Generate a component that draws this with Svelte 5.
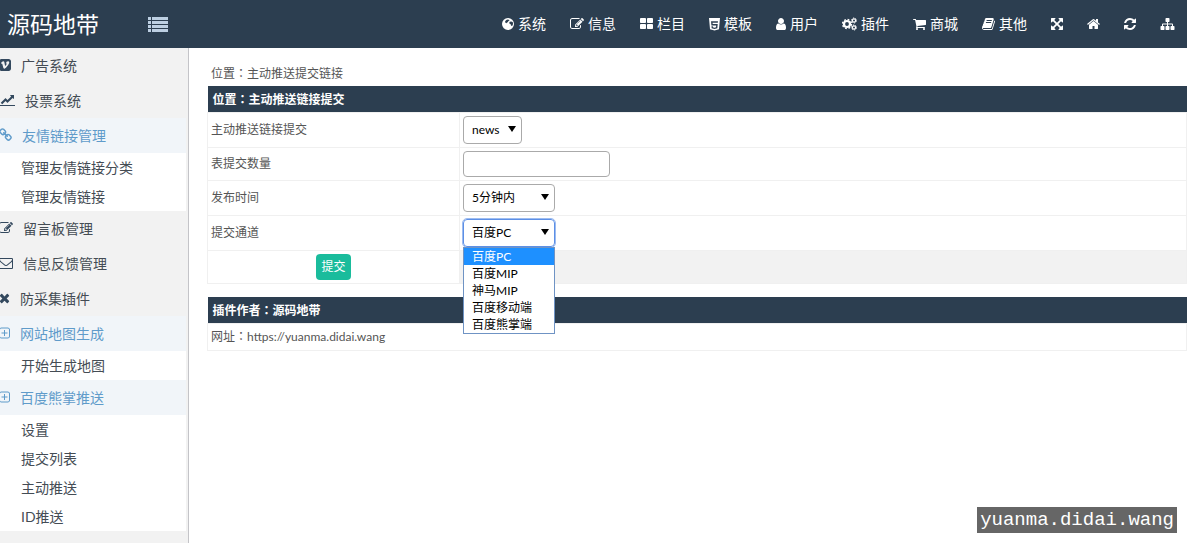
<script>
  const icons = {
    edit: {
      box: "0 0 1792 1792",
      width: 14,
      d: "M888 1184l116-116-152-152-116 116v56h96v96h56zm440-720q-16-16-33 1l-350 350q-17 17-1 33t33-1l350-350q17-17 1-33zm80 594v190q0 119-84.5 203.5t-203.5 84.5h-832q-119 0-203.5-84.5t-84.5-203.5v-832q0-119 84.5-203.5t203.5-84.5h832q63 0 117 25 15 7 18 23 3 17-9 29l-49 49q-14 14-32 8-23-6-45-6h-832q-66 0-113 47t-47 113v832q0 66 47 113t113 47h832q66 0 113-47t47-113v-126q0-13 9-22l64-64q15-15 35-7t20 29zm-96-738l288 288-672 672h-288v-288zm444 132l-92 92-288-288 92-92q28-28 68-28t68 28l152 152q28 28 28 68t-28 68z",
    },
    globe: {
      box: "128 0 1536 1792",
      width: 12,
      d: "M896 128a768 768 0 1 0 0 1536a768 768 0 1 0 0-1536zM900 330l150 60 20 90-140 40-20 120-130 60-80 90-130-60-50-150 90-130 130-90zM1120 620l180-60 190 90 50 160-40 230-110 110-110-60-40-150-130-70-60-110z",
    },
    large: {
      box: "64 0 1664 1792",
      width: 13,
      d: "M832 1024v384q0 52-38 90t-90 38h-512q-52 0-90-38t-38-90v-384q0-52 38-90t90-38h512q52 0 90 38t38 90zm0-768v384q0 52-38 90t-90 38h-512q-52 0-90-38t-38-90v-384q0-52 38-90t90-38h512q52 0 90 38t38 90zm896 768v384q0 52-38 90t-90 38h-512q-52 0-90-38t-38-90v-384q0-52 38-90t90-38h512q52 0 90 38t38 90zm0-768v384q0 52-38 90t-90 38h-512q-52 0-90-38t-38-90v-384q0-52 38-90t90-38h512q52 0 90 38t38 90z",
    },
    html5: {
      box: "0 -128 1408 1792",
      width: 11,
      d: "M1130 597l16-175h-884l47 534h612l-22 228-197 53-196-53-13-140h-175l22 278 362 100h4v-1l359-99 50-544h-644l-15-181h674zM0 0h1408l-128 1438-578 162-574-162z",
    },
    user: {
      box: "256 0 1280 1792",
      width: 10,
      d: "M1536 1399q0 109-62.5 187t-150.5 78h-854q-88 0-150.5-78t-62.5-187q0-85 8.5-160.5t31.5-152 58.5-131 94-89 134.5-34.5q131 128 313 128t313-128q76 0 134.5 34.5t94 89 58.5 131 31.5 152 8.5 160.5zm-256-887q0 159-112.5 271.5t-271.5 112.5-271.5-112.5-112.5-271.5 112.5-271.5 271.5-112.5 271.5 112.5 112.5 271.5z",
    },
    cart: {
      box: "64 0 1664 1792",
      width: 13,
      d: "M704 1536q0 52-38 90t-90 38-90-38-38-90 38-90 90-38 90 38 38 90zm896 0q0 52-38 90t-90 38-90-38-38-90 38-90 90-38 90 38 38 90zm128-1088v512q0 24-16.5 42.5t-40.5 21.5l-1044 122q13 60 13 70 0 16-24 64h920q26 0 45 19t19 45-19 45-45 19h-1024q-26 0-45-19t-19-45q0-11 8-31.5t16-36 21.5-40 15.5-29.5l-177-823h-204q-26 0-45-19t-19-45 19-45 45-19h256q16 0 28.5 6.5t19.5 15.5 13 24.5 8 26 5.5 29.5 4.5 26h1201q26 0 45 19t19 45z",
    },
    book: {
      box: "64 0 1664 1792",
      width: 13,
      d: "M1703 478q40 57 18 129l-275 906q-19 64-76.5 107.5t-122.5 43.5h-923q-77 0-148.5-53.5t-99.5-131.5q-24-67-2-127 0-4 3-27t4-37q1-8-3-21.5t-3-19.5q2-11 8-21t16.5-23.5 16.5-23.5q23-38 45-91.5t30-91.5q3-10 .5-30t-.5-28q3-11 17-28t17-23q21-36 42-92t25-90q1-9-2.5-32t.5-28q4-13 22-30.5t22-22.5q19-26 42.5-84.5t27.5-96.5q1-8-3-25.5t-2-26.5q2-8 9-18t18-23 17-21q8-12 16.5-30.5t15-35 16-36 19.5-32 26.5-23.5 36-11.5 47.5 5.5l-1 3q38-9 51-9h761q74 0 114 56t18 130l-274 906q-36 119-71.5 153.5t-128.5 34.5h-869q-27 0-38 15-11 16-1 43 24 70 144 70h923q29 0 56-15.5t35-41.5l300-987q7-22 5-57 38 15 59 43zm-1064 2q-4 13 2 22.5t20 9.5h608q13 0 25.5-9.5t16.5-22.5l21-64q4-13-2-22.5t-20-9.5h-608q-13 0-25.5 9.5t-16.5 22.5zm-83 256q-4 13 2 22.5t20 9.5h608q13 0 25.5-9.5t16.5-22.5l21-64q4-13-2-22.5t-20-9.5h-608q-13 0-25.5 9.5t-16.5 22.5z",
    },
    expand: {
      box: "128 0 1536 1792",
      width: 12,
      d: "M1411 541l-355 355 355 355 144-144q29-31 70-14 39 17 39 59v448q0 26-19 45t-45 19h-448q-42 0-59-40-17-39 14-69l144-144-355-355-355 355 144 144q31 30 14 69-17 40-59 40h-448q-26 0-45-19t-19-45v-448q0-42 40-59 39-17 69 14l144 144 355-355-355-355-144 144q-19 19-45 19-12 0-24-5-40-17-40-59v-448q0-26 19-45t45-19h448q42 0 59 40 17 39-14 69l-144 144 355 355 355-355-144-144q-31-30-14-69 17-40 59-40h448q26 0 45 19t19 45v448q0 42-39 59-13 5-25 5-26 0-45-19z",
    },
    home: {
      box: "96 0 1600 1792",
      width: 13,
      d: "M1472 992v480q0 26-19 45t-45 19h-384v-384h-256v384h-384q-26 0-45-19t-19-45v-480q0-1 .5-3t.5-3l575-474 575 474q1 2 1 6zm223-69l-62 74q-8 9-21 11h-3q-13 0-21-7l-692-577-692 577q-12 8-24 7-13-2-21-11l-62-74q-8-10-7-23.5t11-21.5l719-599q32-26 76-26t76 26l244 204v-195q0-14 9-23t23-9h192q14 0 23 9t9 23v408l219 182q10 8 11 21.5t-7 23.5z",
    },
    refresh: {
      box: "128 0 1536 1792",
      width: 12,
      d: "M1639 1056q0 5-1 7-64 268-268 434.5t-478 166.5q-146 0-282.5-55t-243.5-157l-129 129q-19 19-45 19t-45-19-19-45v-448q0-26 19-45t45-19h448q26 0 45 19t19 45-19 45l-137 137q71 66 161 102t187 36q134 0 250-65t186-179q11-17 53-117 8-23 30-23h192q13 0 22.5 9.5t9.5 22.5zm25-800v448q0 26-19 45t-45 19h-448q-26 0-45-19t-19-45 19-45l138-138q-148-137-349-137-134 0-250 65t-186 179q-11 17-53 117-8 23-30 23h-199q-13 0-22.5-9.5t-9.5-22.5v-7q65-268 270-434.5t480-166.5q146 0 284 55.5t245 156.5l130-129q19-19 45-19t45 19 19 45z",
    },
    sitemap: {
      box: "0 0 1792 1792",
      width: 15,
      d: "M1792 1248v320q0 40-28 68t-68 28h-320q-40 0-68-28t-28-68v-320q0-40 28-68t68-28h96v-192h-512v192h96q40 0 68 28t28 68v320q0 40-28 68t-68 28h-320q-40 0-68-28t-28-68v-320q0-40 28-68t68-28h96v-192h-512v192h96q40 0 68 28t28 68v320q0 40-28 68t-68 28h-320q-40 0-68-28t-28-68v-320q0-40 28-68t68-28h96v-192q0-52 38-90t90-38h512v-192h-96q-40 0-68-28t-28-68v-320q0-40 28-68t68-28h320q40 0 68 28t28 68v320q0 40-28 68t-68 28h-96v192h512q52 0 90 38t38 90v192h96q40 0 68 28t28 68z",
    },
    vimeo: {
      box: "128 0 1536 1792",
      width: 12,
      d: "M416 128h960q119 0 203.500 84.500t84.500 203.500v960q0 119-84.500 203.500t-203.500 84.500h-960q-119 0-203.500-84.500t-84.500-203.500v-960q0-119 84.500-203.500t203.500-84.500zM370 640l210-200q150-90 220 50l90 430q50 130 110 30l110-190q20-110-110-70 60-280 280-290 210 10 140 270-70 220-400 590-160 160-270 80-60-50-90-160l-110-420q-30-90-120-30z",
    },
    chart: {
      box: "0 0 2048 1792",
      width: 16,
      d: "M2048 1536v128h-2048v-1536h128v1408h1920zm-128-1248v435q0 21-19.500 29.500t-35.500-7.500l-121-121-633 633q-10 10-23 10t-23-10l-233-233-416 416-192-192 585-585q10-10 23-10t23 10l233 233 464-464-121-121q-16-16-7.500-35.500t29.500-19.500h435q14 0 23 9t9 23z",
    },
    link: {
      box: "64 0 1664 1792",
      width: 13,
      d: "M1520 1216q0-40-28-68l-208-208q-28-28-68-28-42 0-72 32 3 3 19 18.500t21.500 21.500 15 19 13 25.500 3.500 27.500q0 40-28 68t-68 28q-15 0-27.500-3.500t-25.500-13-19-15-21.500-21.500-18.500-19q-33 31-33 73 0 40 28 68l206 207q27 27 68 27 40 0 68-26l147-146q28-28 28-67zm-703-705q0-40-28-68l-206-207q-28-28-68-28-39 0-68 27l-147 146q-28 28-28 67 0 40 28 68l208 208q27 27 68 27 42 0 72-31-3-3-19-18.500t-21.500-21.500-15-19-13-25.500-3.500-27.500q0-40 28-68t68-28q15 0 27.500 3.500t25.500 13 19 15 21.500 21.500 18.500 19q33-31 33-73zm895 705q0 120-85 203l-147 146q-83 83-203 83-121 0-204-85l-206-207q-83-83-83-203 0-123 88-209l-88-88q-86 88-208 88-120 0-204-84l-208-208q-84-84-84-204t85-203l147-146q83-83 203-83 121 0 204 85l206 207q83 83 83 203 0 123-88 209l88 88q86-88 208-88 120 0 204 84l208 208q84 84 84 204z",
    },
    envelope: {
      box: "0 0 1792 1792",
      width: 14,
      d: "M1664 1504v-768q-32 36-69 66-268 206-426 338-51 43-83 67t-86.500 48.500-102.500 24.500h-2q-48 0-102.500-24.500t-86.500-48.500-83-67q-158-132-426-338-37-30-69-66v768q0 13 9.500 22.500t22.500 9.500h1472q13 0 22.500-9.500t9.500-22.500zm0-1051v-24.500l-.5-13-3-12.500-5.500-9-9-7.500-14-2.500h-1472q-13 0-22.500 9.500t-9.500 22.500q0 168 147 284 193 152 401 317 6 5 35 29.500t46 37.500 44.500 31.500 50.500 27.500 43 9h2q20 0 43-9t50.500-27.500 44.500-31.500 46-37.500 35-29.500q208-165 401-317 54-43 100.500-115.500t46.500-131.500zm128-37v1088q0 66-47 113t-113 47h-1472q-66 0-113-47t-47-113v-1088q0-66 47-113t113-47h1472q66 0 113 47t47 113z",
    },
    times: {
      box: "192 0 1408 1792",
      width: 11,
      d: "M1490 1322q0 40-28 68l-136 136q-28 28-68 28t-68-28l-294-294-294 294q-28 28-68 28t-68-28l-136-136q-28-28-28-68t28-68l294-294-294-294q-28-28-28-68t28-68l136-136q28-28 68-28t68 28l294 294 294-294q28-28 68-28t68 28l136 136q28 28 28 68t-28 68l-294 294 294 294q28 28 28 68z",
    },
    plus: {
      box: "192 0 1408 1792",
      width: 11,
      d: "M480 192h832q119 0 203.500 84.500t84.500 203.500v832q0 119-84.500 203.500t-203.500 84.500h-832q-119 0-203.500-84.500t-84.500-203.500v-832q0-119 84.500-203.500t203.500-84.500zM480 320q-66 0-113 47t-47 113v832q0 66 47 113t113 47h832q66 0 113-47t47-113v-832q0-66-47-113t-113-47zM832 512h128v320h320v128h-320v320h-128v-320h-320v-128h320z",
    },
  };

  const topMenu = [
    { icon: "globe", text: "系统" },
    { icon: "edit", text: "信息" },
    { icon: "large", text: "栏目" },
    { icon: "html5", text: "模板" },
    { icon: "user", text: "用户" },
    { icon: "cogs", text: "插件" },
    { icon: "cart", text: "商城" },
    { icon: "book", text: "其他" },
    { icon: "expand", title: "全屏" },
    { icon: "home", title: "首页" },
    { icon: "refresh", title: "刷新" },
    { icon: "sitemap", title: "地图" },
  ];

  const sideMenu = [
    { icon: "vimeo", text: "广告系统" },
    { icon: "chart", text: "投票系统" },
    { icon: "link", text: "友情链接管理", children: ["管理友情链接分类", "管理友情链接"] },
    { icon: "edit", text: "留言板管理" },
    { icon: "envelope", text: "信息反馈管理" },
    { icon: "times", text: "防采集插件" },
    { icon: "plus", text: "网站地图生成", children: ["开始生成地图"] },
    { icon: "plus", text: "百度熊掌推送", children: ["设置", "提交列表", "主动推送", "ID推送"] },
  ];

  const channels = ["百度PC", "百度MIP", "神马MIP", "百度移动端", "百度熊掌端"];

  let channel = $state("百度PC");
  let open = $state(true);

  function pick(name) {
    channel = name;
    open = false;
  }
</script>

{#snippet icon(name)}
  {#if name == "cogs"}
    <svg class="icon" width="15" height="14" viewBox="0 0 15 14" aria-hidden="true">
      <g fill="none" stroke="currentColor">
        <circle cx="5" cy="7" r="3" stroke-width="2.200" />
        <circle cx="5" cy="7" r="4.500" stroke-width="1.400" stroke-dasharray="1.770 1.770" />
        <circle cx="12" cy="3.500" r="1.600" stroke-width="1.200" />
        <circle cx="12" cy="3.500" r="2.500" stroke-width="1" stroke-dasharray="1.300 1.300" />
        <circle cx="12" cy="10.500" r="1.600" stroke-width="1.200" />
        <circle cx="12" cy="10.500" r="2.500" stroke-width="1" stroke-dasharray="1.300 1.300" />
      </g>
    </svg>
  {:else}
    <svg class="icon" width={icons[name].width} height="14" viewBox={icons[name].box} aria-hidden="true">
      <path fill="currentColor" fill-rule="evenodd" d={icons[name].d} />
    </svg>
  {/if}
{/snippet}

<header class="topbar">
  <a class="topbar__brand" href="#home">源码地带</a>
  <button class="topbar__toggle" type="button" aria-label="菜单">
    <svg width="20" height="16" viewBox="0 0 20 16" aria-hidden="true">
      <path fill="currentColor" d="M0 0h3v3H0zM4 0h16v3H4zM0 4h3v3H0zM4 4h16v3H4zM0 8h3v3H0zM4 8h16v3H4zM0 12h3v3H0zM4 12h16v3H4z" />
    </svg>
  </button>
  <nav class="topbar__menu">
    {#each topMenu as item}
      <a class="topbar__link" href="#top" aria-label={item.title}>
        {@render icon(item.icon)}
        {#if item.text}<span>{item.text}</span>{/if}
      </a>
    {/each}
  </nav>
</header>

<div class="layout">
  <aside class="sidebar">
    <ul class="sidebar__menu">
      {#each sideMenu as item}
        <li>
          <a class="sidebar__link" class:active={item.children} href="#menu">
            {@render icon(item.icon)}
            <span>{item.text}</span>
          </a>
          {#if item.children}
            <ul class="sidebar__sub">
              {#each item.children as child}
                <li><a class="sidebar__sublink" href="#sub">{child}</a></li>
              {/each}
            </ul>
          {/if}
        </li>
      {/each}
    </ul>
  </aside>

  <main class="content">
    <div class="crumb">位置<span class="colon">：</span>主动推送提交链接</div>

    <form onsubmit={(e) => e.preventDefault()}>
      <table class="panel">
        <thead>
          <tr><th colspan="2">位置<span class="colon">：</span>主动推送链接提交</th></tr>
        </thead>
        <tbody>
          <tr>
            <td class="panel__label"><label for="table">主动推送链接提交</label></td>
            <td>
              <span class="select select--short">
                <select id="table"><option>news</option></select>
              </span>
            </td>
          </tr>
          <tr>
            <td class="panel__label"><label for="count">表提交数量</label></td>
            <td><input id="count" class="text" type="text" /></td>
          </tr>
          <tr>
            <td class="panel__label"><label for="time">发布时间</label></td>
            <td>
              <span class="select">
                <select id="time"><option>5分钟内</option></select>
              </span>
            </td>
          </tr>
          <tr>
            <td class="panel__label"><label for="channel">提交通道</label></td>
            <td>
              <span class="select" class:open>
                <select id="channel" bind:value={channel}>
                  {#each channels as name}
                    <option>{name}</option>
                  {/each}
                </select>
                {#if open}
                  <span class="options">
                    {#each channels as name}
                      <button
                        type="button"
                        class="options__item"
                        class:selected={name == channel}
                        onclick={() => pick(name)}>{name}</button>
                    {/each}
                  </span>
                {/if}
              </span>
            </td>
          </tr>
          <tr>
            <td class="panel__submit"><button class="btn" type="submit">提交</button></td>
            <td class="panel__blank"></td>
          </tr>
        </tbody>
      </table>
    </form>

    <table class="panel">
      <thead>
        <tr><th>插件作者<span class="colon">：</span>源码地带</th></tr>
      </thead>
      <tbody>
        <tr><td>网址<span class="colon">：</span>https://yuanma.didai.wang</td></tr>
      </tbody>
    </table>
  </main>
</div>

<div class="watermark">yuanma.didai.wang</div>

<style>
  :global(body) {
    background: #fff;
    color: #555;
    font-family: Lato, "Noto Sans CJK SC", sans-serif;
    font-size: 12px;
    overflow: hidden;
  }

  a {
    color: inherit;
    text-decoration: none;
  }

  ul {
    list-style: none;
    margin: 0;
    padding: 0;
  }

  button,
  input,
  select {
    font: inherit;
    box-sizing: border-box;
  }

  .icon {
    flex: none;
    display: block;
  }

  /* centred full-width colon */
  .colon {
    font-family: "Noto Sans CJK TC", sans-serif;
    line-height: 1;
  }

  .topbar {
    display: flex;
    align-items: center;
    height: 48px;
    background: #2c3e50;
    color: #fff;
  }

  .topbar__brand {
    width: 142px;
    padding-left: 7px;
    box-sizing: border-box;
    font-size: 23px;
    line-height: 48px;
    white-space: nowrap;
  }

  .topbar__toggle {
    display: flex;
    padding: 2px 6px 0;
    border: 0;
    background: none;
    color: #bdcfe2;
    cursor: pointer;
  }

  .topbar__menu {
    display: flex;
    margin-left: auto;
  }

  .topbar__link {
    display: flex;
    align-items: center;
    gap: 4px;
    padding: 0 12px;
    font-size: 14px;
    line-height: 46px;
    white-space: nowrap;
  }

  .layout {
    display: flex;
    min-height: calc(100vh - 48px);
  }

  .sidebar {
    flex: none;
    width: 188px;
    border-right: 1px solid #c4c4c8;
    background: #f2f2f2;
    overflow: hidden;
    color: #444c54;
    font-size: 14px;
  }

  .sidebar__menu {
    margin: 0 2px 0 -1px;
  }

  .sidebar__link {
    display: flex;
    align-items: center;
    gap: 10px;
    height: 35px;
    padding-bottom: 1px;
    box-sizing: border-box;
  }

  .sidebar__link .icon {
    color: #34495e;
  }

  .sidebar__link.active,
  .sidebar__link.active .icon {
    background: #f1f5f9;
    color: #5f9bca;
  }

  .sidebar__sub {
    background: #fff;
  }

  .sidebar__sublink {
    display: block;
    padding-left: 22px;
    line-height: 29px;
  }

  .content {
    flex: 1;
    min-width: 0;
    padding: 14px 0 0 18px;
  }

  .crumb {
    padding-left: 4px;
    line-height: 24px;
  }

  .panel {
    width: 100%;
    margin-bottom: 13px;
    border-collapse: collapse;
    line-height: 18px;
  }

  .panel th {
    padding: 5px 5px 3px;
    background: #2c3e50;
    color: #fff;
    text-align: left;
  }

  .panel td {
    padding: 3px;
    border: 1px solid #f0f0f0;
    line-height: 20px;
  }

  .panel .panel__label,
  .panel .panel__submit {
    width: 245px;
  }

  .panel__submit {
    text-align: center;
  }

  .panel .panel__blank {
    background: #f2f2f2;
  }

  .select {
    position: relative;
    display: block;
    width: 92px;
  }

  .select--short {
    width: 59px;
  }

  .select::after {
    content: "";
    position: absolute;
    top: 10px;
    right: 6px;
    border: 4px solid transparent;
    border-top: 6px solid #000;
    border-bottom: 0;
    pointer-events: none;
  }

  select {
    appearance: none;
    display: block;
    width: 100%;
    height: 28px;
    padding: 0 8px;
    border: 1px solid #aaa;
    border-radius: 4px;
    background: #fff;
    color: #000;
  }

  .open select {
    border-color: #5c8fe6;
    outline: 1px solid #9dbcf0;
  }

  .options {
    position: absolute;
    z-index: 2;
    top: 28px;
    left: 0;
    right: 0;
    border: 1px solid #6f93c4;
    background: #fff;
  }

  .options__item {
    display: block;
    width: 100%;
    height: 17px;
    padding: 0 8px;
    border: 0;
    background: none;
    color: #000;
    line-height: 17px;
    text-align: left;
  }

  .options__item.selected {
    background: #1e90ff;
    color: #fff;
  }

  .text {
    display: block;
    width: 147px;
    height: 26px;
    padding: 0 8px;
    border: 1px solid #aaa;
    border-radius: 4px;
  }

  .btn {
    height: 26px;
    padding: 0 5px;
    border: 0;
    border-radius: 4px;
    background: #1abc9c;
    color: #fff;
    vertical-align: top;
  }

  .watermark {
    position: fixed;
    right: 10px;
    bottom: 10px;
    padding: 0 3px;
    background: #666;
    color: #fff;
    font-family: "Liberation Mono", monospace;
    font-size: 19px;
    line-height: 26px;
  }
</style>
